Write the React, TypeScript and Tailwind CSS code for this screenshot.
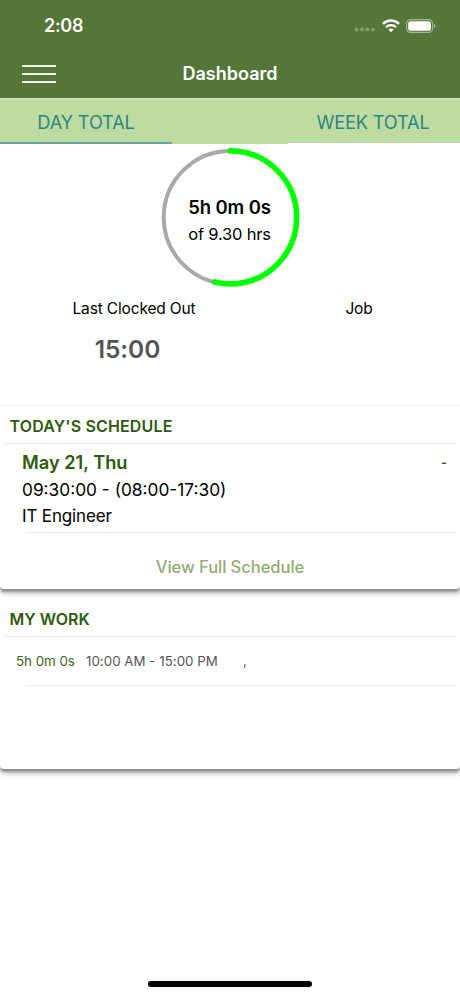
import type { ReactNode } from "react";

const RADIUS = 66.5;
const CIRCUMFERENCE = 2 * Math.PI * RADIUS;

function StatusBar() {
  return (
    <div className="flex h-[50px] items-center justify-between pl-[44px] pr-[24px]">
      <span className="pt-[2px] text-[18px] font-semibold leading-5 tracking-[-0.3px]">2:08</span>
      <div className="flex items-center">
        <svg width="22" height="6" viewBox="0 0 22 6" className="mt-[10px]" fill="#82a067">
          <circle cx="2.5" cy="2.5" r="2" />
          <circle cx="8" cy="2.5" r="2" />
          <circle cx="13.5" cy="2.5" r="2" />
          <circle cx="19" cy="2.5" r="2" />
        </svg>
        <svg width="18" height="14" viewBox="0 0 18 14" className="ml-[6px] mt-px" fill="none" stroke="white">
          <path d="M1 4.9C5.6.5 12.4.5 17 4.9" strokeWidth="2.5" />
          <path d="M4 8.1C6.8 5.4 11.2 5.4 14 8.1" strokeWidth="2.3" />
          <path d="M9 13.3 6.4 10.6C7.9 9.2 10.1 9.2 11.6 10.6Z" fill="white" stroke="none" />
        </svg>
        <svg width="30" height="14" viewBox="0 0 30 14" className="ml-[6px] mt-px" fill="none">
          <rect x="0.6" y="0.6" width="26" height="12.8" rx="3.8" stroke="#a5ba92" strokeWidth="1.1" />
          <rect x="2.2" y="2.2" width="22.8" height="9.6" rx="2.4" fill="white" />
          <path d="M28 4.8C30 5.6 30 8.4 28 9.2Z" fill="#a5ba92" />
        </svg>
      </div>
    </div>
  );
}

function NavBar() {
  return (
    <div className="grid h-12 grid-cols-3 items-center">
      <button className="ml-[22px] flex w-[34px] flex-col gap-[6px]" aria-label="Menu">
        <span className="h-[2px] w-full bg-[#f1f8e9]" />
        <span className="h-[2px] w-full bg-[#f1f8e9]" />
        <span className="h-[2px] w-full bg-[#f1f8e9]" />
      </button>
      <h1 className="text-center text-[18px] font-semibold leading-6">Dashboard</h1>
    </div>
  );
}

function Tabs() {
  return (
    <div className="flex h-[46px] items-start border-t-2 border-[#cfe2bd] text-[18.2px] tracking-[-0.15px] text-[#2f8583]">
      <button className="h-11 w-[172px] border-b-2 border-[#67a99d] bg-[#bedca2] leading-[44px]">DAY TOTAL</button>
      <div className="h-11 w-[116px] bg-[#bedca2]" />
      <button className="h-[43px] w-[172px] bg-[#bedca2] pr-[2px] leading-[44px]">WEEK TOTAL</button>
    </div>
  );
}

function ProgressRing({ value, total }: { value: number; total: number }) {
  return (
    <div className="mx-auto mt-[3px] grid h-[141px] w-[142px] place-items-center">
      <svg width="142" height="141" viewBox="0 0 142 141" fill="none" className="col-start-1 row-start-1">
        <circle cx="71.2" cy="70.4" r={RADIUS} stroke="#a9a9a9" strokeWidth="4" />
        <circle
          cx="71.2"
          cy="70.4"
          r={RADIUS}
          stroke="#00ff00"
          strokeWidth="5.6"
          strokeLinecap="round"
          strokeDasharray={`${(value / total) * CIRCUMFERENCE} ${CIRCUMFERENCE}`}
          transform="rotate(-90 71.2 70.4)"
        />
      </svg>
      <div className="col-start-1 row-start-1 pr-px pt-[7px] text-center">
        <p className="text-[18.5px] font-semibold leading-[27px] tracking-[-0.1px]">5h 0m 0s</p>
        <p className="text-[16.5px] leading-[27px] tracking-[-0.2px]">of 9.30 hrs</p>
      </div>
    </div>
  );
}

function Card({ title, className, children }: { title: string; className: string; children: ReactNode }) {
  return (
    <section
      className={`rounded-b-[4px] bg-white shadow-[0_3px_3px_rgba(0,0,0,0.35),0_5px_6px_rgba(0,0,0,0.18)] ${className}`}
    >
      <h2 className="mx-[5px] border-b border-[#e6e6e6] pl-[4.5px] text-[16px] font-semibold text-[#2f5a0b]">{title}</h2>
      {children}
    </section>
  );
}

export default function App() {
  return (
    <div className="flex h-[996px] w-[460px] flex-col overflow-hidden bg-white font-['Inter',sans-serif] text-black">
      <header className="bg-[#547638] text-white">
        <StatusBar />
        <NavBar />
      </header>
      <Tabs />

      <ProgressRing value={5} total={9.3} />

      {/* Clock status */}
      <div className="flex h-[117px] pt-[9px] text-center">
        <div className="w-[268px]">
          <p className="text-[15.5px] leading-6 tracking-[-0.15px]">Last Clocked Out</p>
          <p className="mt-[12px] pr-[13px] text-[24.5px] font-semibold leading-8 tracking-[-0.1px] text-[#555]">15:00</p>
        </div>
        <p className="w-[182px] text-[15.5px] leading-6 tracking-[-0.15px]">Job</p>
      </div>

      {/* Schedule */}
      <Card title="TODAY'S SCHEDULE" className="h-[184px] border-t border-[#f0f0f0] [&>h2]:h-[38px] [&>h2]:leading-[41px] [&>h2]:tracking-[0.15px]">
        <div className="pl-[22px] leading-[26px]">
          <div className="flex h-[33px] items-end justify-between pr-[13px] font-semibold text-[#2f5a0b]">
            <span className="pb-[2px] text-[18.2px]">May 21, Thu</span>
            <span className="pb-[2px] text-[13px]">-</span>
          </div>
          <p className="h-[26px] text-[17.3px]">09:30:00 - (08:00-17:30)</p>
          <p className="h-[26px] text-[17px] tracking-[-0.15px]">IT Engineer</p>
        </div>
        <hr className="ml-[28px] mr-[4px] mt-[3px] border-[#e9e9e9]" />
        <button className="mt-[22px] block w-full text-[16.6px] font-medium leading-6 tracking-[-0.08px] text-[#91ad71]">View Full Schedule</button>
      </Card>

      {/* Logged work */}
      <Card title="MY WORK" className="mt-[9px] h-[171px] [&>h2]:h-[39px] [&>h2]:leading-[42px]">
        <div className="flex h-[48px] items-center pl-[16px] pt-[2px] text-[13.3px] text-[#555]">
          <span className="w-[70px] text-[#3f6619]">5h 0m 0s</span>
          <span className="w-[157px] tracking-[0.03px]">10:00 AM - 15:00 PM</span>
          <span>,</span>
        </div>
        <hr className="ml-[26px] mr-[4px] border-[#eee]" />
      </Card>

      <div className="mx-auto mb-[9px] mt-auto h-[6px] w-[164px] rounded-full bg-black" />
    </div>
  );
}
